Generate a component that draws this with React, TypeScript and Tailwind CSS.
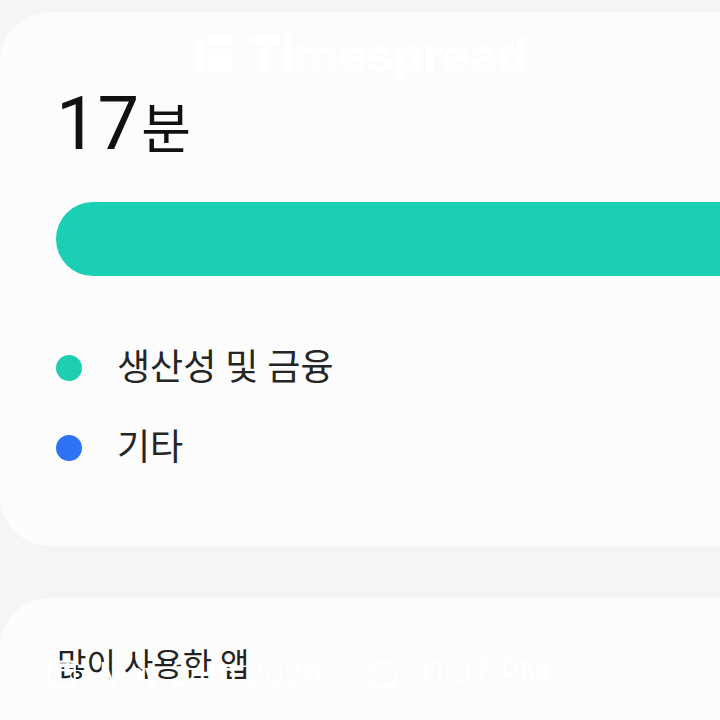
import { AlarmClock, Calendar } from 'lucide-react';

const kr = "font-['Roboto','Noto_Sans_CJK_KR',sans-serif]";

function LegendRow({ color, label }: { color: string; label: string }) {
  return (
    <div className="flex h-[80px] items-center gap-[35px]">
      <span className={`h-[26px] w-[26px] shrink-0 rounded-full ${color}`} />
      <span className={`text-[36px] leading-none text-[#252525] ${kr}`}>{label}</span>
    </div>
  );
}

export default function App() {
  return (
    <div className="relative h-[720px] w-[720px] overflow-hidden bg-[#f5f5f7]">
      {/* Usage card */}
      <section className="mt-[12px] h-[534px] w-[800px] rounded-[50px] bg-[#fcfcfc] pl-[56px]">
        <div className={`flex h-[190px] items-baseline pt-[75px] text-[#111] ${kr}`}>
          <span className="text-[74px] leading-none">17</span>
          <span className="ml-[2px] text-[54px] leading-none">분</span>
        </div>
        <div className="h-[74px] rounded-l-[37px] bg-[#1bcfb4]" />
        <div className="mt-[52px]">
          <LegendRow color="bg-[#1fcdb0]" label="생산성 및 금융" />
          <LegendRow color="bg-[#2f72f5]" label="기타" />
        </div>
      </section>

      {/* Most used apps card */}
      <section className="mt-[52px] h-[200px] w-[800px] rounded-[50px] bg-[#fcfcfc] pl-[57px] pt-[51px]">
        <h2 className={`text-[32px] leading-none text-[#222] ${kr}`}>많이 사용한 앱</h2>
      </section>

      {/* Watermark logo */}
      <div className="absolute left-[195px] top-[33px] flex items-center gap-[17px] text-white">
        <div className="flex h-[36px] gap-[3px]">
          <div className="flex w-[10px] flex-col gap-[3px]">
            <span className="h-[9px] rounded-full bg-white" />
            <span className="flex-1 bg-white" />
          </div>
          <div className="flex w-[24px] flex-col gap-[3px]">
            <span className="h-[9px] bg-white" />
            <span className="flex-1 bg-white" />
          </div>
        </div>
        <span className="font-['Inter',sans-serif] text-[48px] font-extrabold leading-[44px] tracking-[-0.6px]">Timespread</span>
      </div>

      {/* Watermark date and time */}
      <div className="absolute left-[40px] right-0 top-[632px] h-[88px] border-t border-t-white/70" />
      <div className="absolute left-[47px] top-[654px] flex h-[38px] items-center whitespace-nowrap text-white">
        <Calendar size={34} strokeWidth={1.5} className="-ml-[2px]" />
        <span className="ml-[20px] w-[265px] font-['Inter',sans-serif] text-[31px] leading-none">May 24th 2026</span>
        <AlarmClock size={38} strokeWidth={1.5} />
        <span className="ml-[16px] font-['Inter',sans-serif] text-[32px] leading-none">11:37 PM</span>
      </div>
    </div>
  );
}
